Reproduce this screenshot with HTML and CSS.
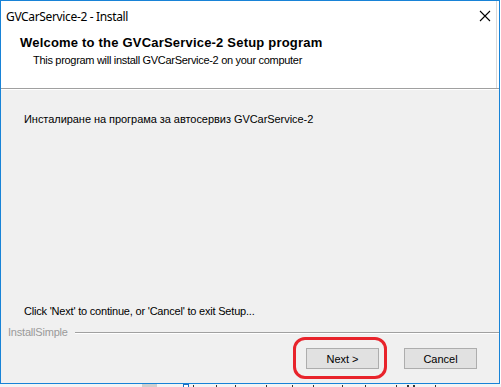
FILE: index.html
```html
<!DOCTYPE html>
<html>
<head>
<meta charset="utf-8">
<link rel="stylesheet" href="styles.css">
</head>
<body>
<div class="window">
  <div class="titlebar">
    <span class="title">GVCarService-2 - Install</span>
    <svg class="close" width="12" height="12" viewBox="0 0 12 12"><path d="M1 1 L11 11 M11 1 L1 11" stroke="#000" stroke-width="1.1" fill="none"/></svg>
  </div>
  <div class="header">
    <div class="welcome">Welcome to the GVCarService-2 Setup program</div>
    <div class="subtitle">This program will install GVCarService-2 on your computer</div>
  </div>
  <div class="body">
    <div class="intro">Инсталиране на програма за автосервиз GVCarService-2</div>
    <div class="spacer"></div>
    <div class="hint">Click 'Next' to continue, or 'Cancel' to exit Setup...</div>
    <div class="brand"><span class="brand-name">InstallSimple</span><span class="brand-line"></span></div>
    <div class="buttons">
      <div class="btn-wrap">
        <button class="btn">Next &gt;</button>
        <span class="highlight"></span>
      </div>
      <button class="btn">Cancel</button>
    </div>
  </div>
</div>
<div class="desk">
  <span class="blk"></span><span class="chk"></span>
  <span class="tick t1"></span><span class="tick t2"></span><span class="tick t3"></span><span class="tick t4"></span><span class="tick t5"></span><span class="tick t6"></span><span class="tick t7"></span><span class="tick t8"></span><span class="tick t9"></span><span class="tick t10"></span><span class="tick t11"></span><span class="tick t12"></span>
</div>
</body>
</html>
```
FILE: styles.css
```css
html, body {
  margin: 0;
  padding: 0;
  background: #ffffff;
}
body {
  width: 501px;
  height: 387px;
  overflow: hidden;
  font-family: "Liberation Sans", Arial, sans-serif;
  font-size: 11px;
  color: #000;
}
.window {
  width: 500px;
  height: 384px;
  box-sizing: border-box;
  border: 1px solid #1883d7;
  display: flex;
  flex-direction: column;
  background: #fff;
}
.titlebar {
  height: 30px;
  flex: none;
  display: flex;
  align-items: center;
  justify-content: space-between;
  padding: 0 5px 0 5px;
  border-right: 1px solid #d9d9d9;
  margin-right: 2px;
}
.title {
  font-family: "Noto Sans", "Open Sans", sans-serif;
  font-size: 12px;
  letter-spacing: -0.35px;
  margin-top: 1px;
}
.close {
  display: block;
  margin-top: -1px;
}
.header {
  height: 57px;
  flex: none;
  box-sizing: border-box;
  padding: 4px 0 0 19px;
  border-right: 1px solid #d9d9d9;
  margin-right: 2px;
}
.welcome {
  font-weight: bold;
  font-size: 13px;
  line-height: 15px;
  letter-spacing: 0.2px;
}
.subtitle {
  margin: 4px 0 0 13px;
  line-height: 13px;
  letter-spacing: -0.3px;
}
.body {
  flex: 1;
  background: #f0f0f0;
  border-top: 1px solid #a0a0a0;
  box-shadow: inset 0 1px 0 #ffffff;
  display: flex;
  flex-direction: column;
  padding-top: 24px;
}
.intro {
  padding-left: 23px;
  line-height: 13px;
  letter-spacing: -0.05px;
}
.spacer {
  flex: 1;
}
.hint {
  padding-left: 23px;
  line-height: 13px;
  letter-spacing: -0.2px;
}
.brand {
  display: flex;
  align-items: center;
  margin-top: 8px;
  padding-left: 7px;
}
.brand-name {
  color: #9a9a9a;
  line-height: 13px;
  letter-spacing: -0.2px;
}
.brand-line {
  flex: 1;
  height: 0;
  border-top: 1px solid #a0a0a0;
  border-bottom: 1px solid #ffffff;
  margin-left: 7px;
}
.buttons {
  display: flex;
  justify-content: flex-end;
  gap: 25px;
  padding: 9px 22px 14px 0;
}
.btn-wrap {
  position: relative;
  display: flex;
}
.btn {
  width: 73px;
  height: 21px;
  box-sizing: border-box;
  background: #e1e1e1;
  border: 1px solid #adadad;
  font-family: "Liberation Sans", Arial, sans-serif;
  font-size: 11px;
  color: #000;
  padding: 0;
  margin: 0;
}
.highlight {
  position: absolute;
  left: -13px;
  top: -11px;
  width: 94px;
  height: 42px;
  box-sizing: border-box;
  border: 3px solid #e8232b;
  border-radius: 12px;
  pointer-events: none;
}
.desk {
  height: 3px;
  overflow: hidden;
  background: #f4f4f4;
  display: flex;
  align-items: flex-start;
}
.blk {
  width: 15px;
  height: 3px;
  background: #cfcfcf;
  margin-left: 142px;
  flex: none;
}
.chk {
  width: 6px;
  height: 3px;
  border: 1px solid #1b6fc4;
  border-bottom: none;
  box-sizing: border-box;
  margin-left: 26px;
  background: #fff;
  flex: none;
}
.tick {
  width: 1px;
  height: 2px;
  background: #333;
  margin-top: 1px;
  flex: none;
}
.t1 { margin-left: 4px; }
.t2 { margin-left: 22px; }
.t3 { margin-left: 18px; }
.t4 { margin-left: 30px; }
.t5 { margin-left: 25px; }
.t6 { margin-left: 20px; }
.t7 { margin-left: 28px; }
.t8 { margin-left: 22px; }
.t9 { margin-left: 30px; }
.t10 { margin-left: 10px; width: 2px; }
.t11 { margin-left: 4px; width: 2px; }
.t12 { margin-left: 20px; }
```
